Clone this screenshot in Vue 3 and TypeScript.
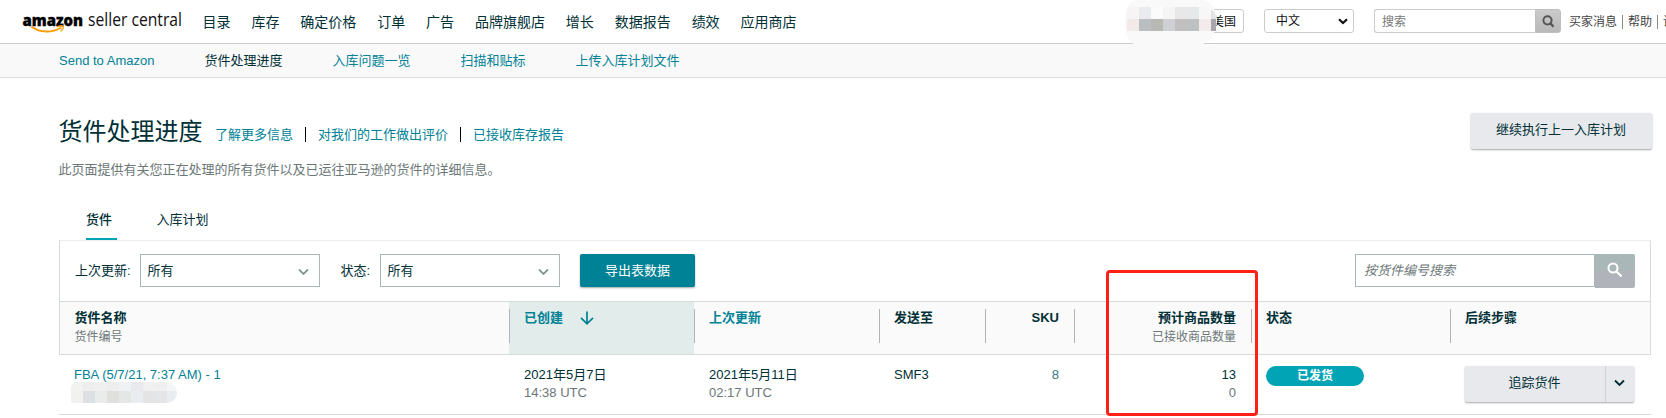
<script setup lang="ts">
interface Column {
  key: string
  title: string
  sub?: string
  sortable?: boolean
  active?: boolean
  right?: boolean
}

const mainNav: string[] = ['目录', '库存', '确定价格', '订单', '广告', '品牌旗舰店', '增长', '数据报告', '绩效', '应用商店']
const subNav: string[] = ['Send to Amazon', '货件处理进度', '入库问题一览', '扫描和贴标', '上传入库计划文件']
const currentSub = '货件处理进度'
const headLinks: string[] = ['了解更多信息', '对我们的工作做出评价', '已接收库存报告']
const columns: Column[] = [
  { key: 'name', title: '货件名称', sub: '货件编号' },
  { key: 'created', title: '已创建', sortable: true, active: true },
  { key: 'updated', title: '上次更新', sortable: true },
  { key: 'to', title: '发送至' },
  { key: 'sku', title: 'SKU', right: true },
  { key: 'units', title: '预计商品数量', sub: '已接收商品数量', right: true },
  { key: 'status', title: '状态' },
  { key: 'next', title: '后续步骤' },
]
const accountTiles: string[] = [
  '#f6f4f4', '#e9ebef', '#fbfbfb', '#f4f5f4', '#e8e8e9', '#e6e9e9', '#f8f7f8', '#e3e3e4',
  '#f2eae8', '#b9bec1', '#b8b8b5', '#cfd0d3', '#c2bfc1', '#bdc1c4', '#f3ebeb', '#a8a6ab',
]
const idTiles: string[] = [
  '#f2f2f1', '#eeeeee', '#f0f0f0', '#eeeeef', '#f0f1f2', '#e9e9ed', '#f0f0f0', '#eeefee', '#f3f5f6',
  '#f1f1ef', '#dde0e3', '#eaecec', '#dfdfde', '#e5e7e7', '#e9edef', '#e4e4e5', '#e4e5e7', '#e9edf1',
]
</script>

<template>
  <div class="page">
    <header class="top">
      <svg class="logo" width="162" height="28" viewBox="0 0 162 28">
        <text class="logo-bold" x="0.500" y="17.500" textLength="60.500" lengthAdjust="spacingAndGlyphs">amazon</text>
        <text class="logo-thin" x="66" y="17.500" textLength="94" lengthAdjust="spacingAndGlyphs">seller central</text>
        <path d="M10 19C18 24.800 30 25 38.500 20" fill="none" stroke="#f90" stroke-width="2" stroke-linecap="round" />
        <path d="M35.500 18.700C38 17.700 40.500 17.700 41.200 18.300C41.700 19.300 40.600 21.700 39 23" fill="none" stroke="#f90" stroke-width="1.400" stroke-linecap="round" />
      </svg>
      <nav class="main-nav">
        <a v-for="n in mainNav" :key="n">{{ n }}</a>
      </nav>
      <div class="tools">
        <div class="account">
          <div class="market">美国</div>
          <div class="smudge"></div>
          <div class="tiles account-tiles"><i v-for="(c, i) in accountTiles" :key="i" :style="{ background: c }"></i></div>
        </div>
        <div class="lang">
          <span>中文</span>
          <svg width="10" height="7" viewBox="0 0 10 7"><path d="M1 1.200L5 5L9 1.200" fill="none" stroke="#111" stroke-width="2.200" /></svg>
        </div>
        <div class="search">
          <span class="search-input">搜索</span>
          <span class="search-btn">
            <svg width="13" height="13" viewBox="0 0 13 13"><circle cx="5.500" cy="5.300" r="4.100" fill="none" stroke="#555" stroke-width="2" /><path d="M8.300 8.300L11.500 11.700" stroke="#555" stroke-width="2.400" /></svg>
          </span>
        </div>
        <div class="util"><a>买家消息</a><b></b><a>帮助</a><b></b><a>设置</a></div>
      </div>
    </header>

    <nav class="sub-nav">
      <a v-for="s in subNav" :key="s" :class="{ current: s === currentSub }">{{ s }}</a>
    </nav>

    <main>
      <section class="head">
        <div class="head-text">
          <div class="title-row">
            <h1>货件处理进度</h1>
            <div class="head-links"><a v-for="l in headLinks" :key="l">{{ l }}</a></div>
          </div>
          <p>此页面提供有关您正在处理的所有货件以及已运往亚马逊的货件的详细信息。</p>
        </div>
        <button class="grey-btn resume">继续执行上一入库计划</button>
      </section>

      <div class="tabs"><span class="tab on">货件</span><span class="tab">入库计划</span></div>

      <section class="panel">
        <div class="filters">
          <label class="l1">上次更新:</label>
          <div class="select">所有<svg width="11" height="8" viewBox="0 0 11 8"><path d="M1 1.500L5.500 6L10 1.500" fill="none" stroke="#879596" stroke-width="1.800" /></svg></div>
          <label class="l2">状态:</label>
          <div class="select">所有<svg width="11" height="8" viewBox="0 0 11 8"><path d="M1 1.500L5.500 6L10 1.500" fill="none" stroke="#879596" stroke-width="1.800" /></svg></div>
          <button class="export">导出表数据</button>
          <div class="find">
            <span class="find-input">按货件编号搜索</span>
            <span class="find-btn">
              <svg width="16" height="16" viewBox="0 0 16 16"><circle cx="6" cy="6" r="4.500" fill="none" stroke="#fff" stroke-width="2" /><path d="M9.300 9.300L14.500 14.500" stroke="#fff" stroke-width="2.200" /></svg>
            </span>
          </div>
        </div>

        <div class="row thead">
          <div v-for="c in columns" :key="c.key" class="th" :class="{ right: c.right, active: c.active, sortable: c.sortable }">
            <div class="th-title">
              {{ c.title }}
              <svg v-if="c.active" width="14" height="14" viewBox="0 0 14 14"><path d="M7 0.500V12.500M1 6.800L7 12.800L13 6.800" fill="none" stroke="#008296" stroke-width="1.700" /></svg>
            </div>
            <div v-if="c.sub" class="th-sub">{{ c.sub }}</div>
          </div>
        </div>
      </section>

      <div class="row tbody">
        <div class="td name">
          <a>FBA (5/7/21, 7:37 AM) - 1</a>
          <div class="tiles id-tiles"><i v-for="(c, i) in idTiles" :key="i" :style="{ background: c }"></i></div>
        </div>
        <div class="td">2021年5月7日<small>14:38 UTC</small></div>
        <div class="td">2021年5月11日<small>02:17 UTC</small></div>
        <div class="td">SMF3</div>
        <div class="td right"><a class="count">8</a></div>
        <div class="td right">13<small>0</small></div>
        <div class="td"><span class="badge">已发货</span></div>
        <div class="td">
          <div class="split">
            <span class="split-main">追踪货件</span>
            <span class="split-more"><svg width="11" height="8" viewBox="0 0 11 8"><path d="M1 1.500L5.500 6L10 1.500" fill="none" stroke="#002f36" stroke-width="1.900" /></svg></span>
          </div>
        </div>
      </div>
    </main>
    <div class="highlight"></div>
  </div>
</template>

<style>
body {
  margin: 0;
  overflow: hidden;
}
</style>

<style scoped>
* {
  box-sizing: border-box;
}
.page {
  position: relative;
  width: 1666px;
  height: 418px;
  overflow: hidden;
  background: #fff;
  color: #002f36;
  font: 13px/18px "Liberation Sans", "Noto Sans CJK SC", sans-serif;
  white-space: nowrap;
}
svg {
  display: block;
  flex: none;
}
.top {
  display: flex;
  height: 44px;
  border-bottom: 1px solid #ccc;
}
.logo {
  margin: 8px 0 0 22px;
  overflow: visible;
}
.logo-bold {
  font: 800 16px "Open Sans", sans-serif;
  fill: #000;
  stroke: #000;
  stroke-width: 0.400px;
}
.logo-thin {
  font: 400 18px "Open Sans", sans-serif;
  fill: #111;
}
.main-nav {
  display: flex;
  gap: 20.900px;
  margin-left: 18.500px;
  font-size: 14px;
  line-height: 44px;
}
.tools {
  display: flex;
  margin-left: auto;
  width: 539px;
  flex: none;
  font-size: 12px;
  padding-top: 9px;
}
.account {
  position: relative;
  width: 117px;
  height: 24px;
  flex: none;
}
.market {
  margin-left: 30px;
  height: 24px;
  border: 1px solid #ccc;
  border-radius: 3px;
  text-align: right;
  padding-right: 7px;
  line-height: 24px;
  color: #111;
}
.smudge {
  position: absolute;
  left: -2px;
  top: -12px;
  width: 92px;
  height: 51px;
  background: #f9f9f9;
  border-radius: 28px 34px 40px 30px;
}
.tiles {
  display: grid;
  grid-auto-rows: 12px;
}
.account-tiles {
  position: absolute;
  left: 0;
  top: -2px;
  width: 89px;
  grid-template-columns: repeat(7, 12px) 5px;
  overflow: hidden;
  border-radius: 0 12px 0 0;
}
.lang {
  display: flex;
  align-items: center;
  justify-content: space-between;
  width: 90px;
  height: 24px;
  margin-left: 20px;
  padding: 0 5px 0 11px;
  border: 1px solid #ccc;
  border-radius: 3px;
  color: #111;
  flex: none;
}
.search {
  display: flex;
  width: 187px;
  height: 24px;
  margin-left: 20px;
  flex: none;
}
.search-input {
  flex: 1;
  border: 1px solid #ccc;
  border-right: 0;
  border-radius: 3px 0 0 3px;
  padding-left: 7px;
  line-height: 24px;
  color: #777;
}
.search-btn {
  width: 26px;
  display: grid;
  place-items: center;
  background: linear-gradient(#cacaca, #b9b9b9);
  border: 1px solid #bfbfbf;
  border-radius: 0 3px 3px 0;
}
.util {
  display: flex;
  align-items: center;
  height: 25px;
  margin-left: 8px;
  color: #444;
}
.util b {
  width: 1px;
  height: 14px;
  background: #888;
  margin: 0 5px;
}
.sub-nav {
  display: flex;
  gap: 50px;
  height: 34px;
  padding-left: 59px;
  background: #f9f9f9;
  border-bottom: 1px solid #ddd;
  line-height: 33px;
  color: #008296;
}
.sub-nav a:first-child {
  width: 95.500px;
}
.sub-nav .current {
  color: #002f36;
}
main {
  width: 1592px;
  margin-left: 59px;
}
.head {
  display: flex;
  justify-content: space-between;
  padding-top: 35px;
  height: 123px;
}
.head-text {
  margin-left: -0.500px;
}
.title-row {
  display: flex;
  align-items: baseline;
  height: 38px;
}
h1 {
  margin: 0;
  font-size: 24px;
  line-height: 38px;
  font-weight: 400;
}
.head-links {
  display: flex;
  margin-left: 12.500px;
  color: #008296;
  transform: translateY(-1px);
}
.head-links a {
  line-height: 15px;
}
.head-links a + a {
  margin-left: 12px;
  padding-left: 12px;
  border-left: 1px solid #000;
}
p {
  margin: 10px 0 0;
  line-height: 18px;
  color: #6c7778;
}
button {
  border: 0;
  padding: 0;
  font: inherit;
}
.grey-btn {
  background: #e7e9ed;
  color: #002f36;
  border-radius: 2px;
  box-shadow: 0 1px 2px rgba(0, 0, 0, 0.350);
}
.resume {
  width: 181px;
  height: 36px;
  padding-bottom: 2px;
  margin-right: -0.500px;
}
.tabs {
  display: flex;
  gap: 39.500px;
  height: 39px;
  padding-left: 27px;
}
.tab {
  line-height: 38px;
}
.tab.on {
  width: 31px;
  border-bottom: 2px solid #00a4b4;
  font-weight: 500;
}
.panel {
  border: 1px solid #d5dbdb;
  border-top-color: #eaeded;
}
.filters {
  display: flex;
  align-items: flex-start;
  height: 60px;
  padding: 13px 15px 0 15px;
  line-height: 33px;
}
.l1 {
  width: 65px;
}
.l2 {
  width: 39.500px;
  margin-left: 20.500px;
}
.select {
  display: flex;
  justify-content: space-between;
  align-items: center;
  width: 180px;
  height: 33px;
  padding: 0 10px 0 6.500px;
  border: 1px solid #aab7b8;
  line-height: 31px;
}
.select svg {
  margin-top: 3px;
}
.export {
  width: 115px;
  height: 33px;
  margin-left: 20px;
  padding-bottom: 1px;
  border-radius: 2px;
  background: #008296;
  color: #fff;
  box-shadow: 0 1px 2px rgba(0, 0, 0, 0.350);
}
.find {
  display: flex;
  margin-left: auto;
}
.find-input {
  width: 240px;
  height: 33px;
  border: 1px solid #aab7b8;
  padding-left: 8px;
  line-height: 31px;
  font-style: italic;
  color: #6c7778;
}
.find-btn {
  width: 40px;
  height: 34px;
  display: grid;
  place-items: center;
  padding-bottom: 3px;
  border-radius: 0 2px 2px 0;
  background: linear-gradient(#aab7b8 50%, #b0b3b9 50%);
}
.row {
  display: grid;
  grid-template-columns: 449px 185px 185px 106px 89px 177px 199px 1fr;
}
.thead {
  height: 53px;
  border-top: 1px solid #d5dbdb;
  background: #fafafa;
}
.th {
  position: relative;
  padding: 7px 15px 0;
}
.th:first-child {
  padding-left: 14.500px;
}
.th + .th::before {
  content: "";
  position: absolute;
  left: 0;
  top: 7px;
  width: 1px;
  height: 34px;
  background: #aeb4b7;
}
.th-title {
  display: flex;
  gap: 17px;
  align-items: center;
  font-weight: 700;
}
.th-sub {
  margin-top: 1px;
  font-size: 12px;
  color: #6c7778;
}
.sortable .th-title {
  color: #008296;
}
.active {
  background: #e2eceb;
}
.right {
  text-align: right;
}
.right .th-title {
  justify-content: flex-end;
}
.tbody {
  height: 60px;
  border-bottom: 1px solid #d5dbdb;
  padding-left: 1px;
}
.td {
  padding: 11px 15px 0;
}
.td a {
  color: #008296;
}
.td .count {
  color: #3b7687;
}
.td small {
  display: block;
  font-size: 13px;
  color: #6c7778;
}
.name {
  position: relative;
}
.name a {
  margin-left: -1px;
}
.id-tiles {
  position: absolute;
  left: 11px;
  top: 27px;
  width: 106px;
  grid-template-columns: repeat(8, 12px) 10px;
  grid-template-rows: 9px 12px;
  border-radius: 6px 11px 11px 2px;
  overflow: hidden;
}
.badge {
  display: block;
  width: 98px;
  height: 20px;
  border-radius: 10px;
  background: #00a4b4;
  color: #fff;
  font-size: 12px;
  font-weight: 700;
  line-height: 20px;
  text-align: center;
}
.split {
  display: flex;
  width: 169px;
  height: 36px;
  margin-left: -0.500px;
  border-radius: 2px;
  background: #e7e9ed;
  box-shadow: 0 1px 2px rgba(0, 0, 0, 0.350);
  line-height: 34px;
  text-align: center;
}
.split-main {
  width: 141px;
  border-right: 1px solid #cdd1d5;
}
.split-more {
  flex: 1;
  display: grid;
  place-items: center;
  padding-bottom: 2px;
}
.highlight {
  position: absolute;
  left: 1106px;
  top: 270px;
  width: 152px;
  height: 146px;
  border: 3px solid #ff2015;
  border-radius: 4px;
}
</style>
